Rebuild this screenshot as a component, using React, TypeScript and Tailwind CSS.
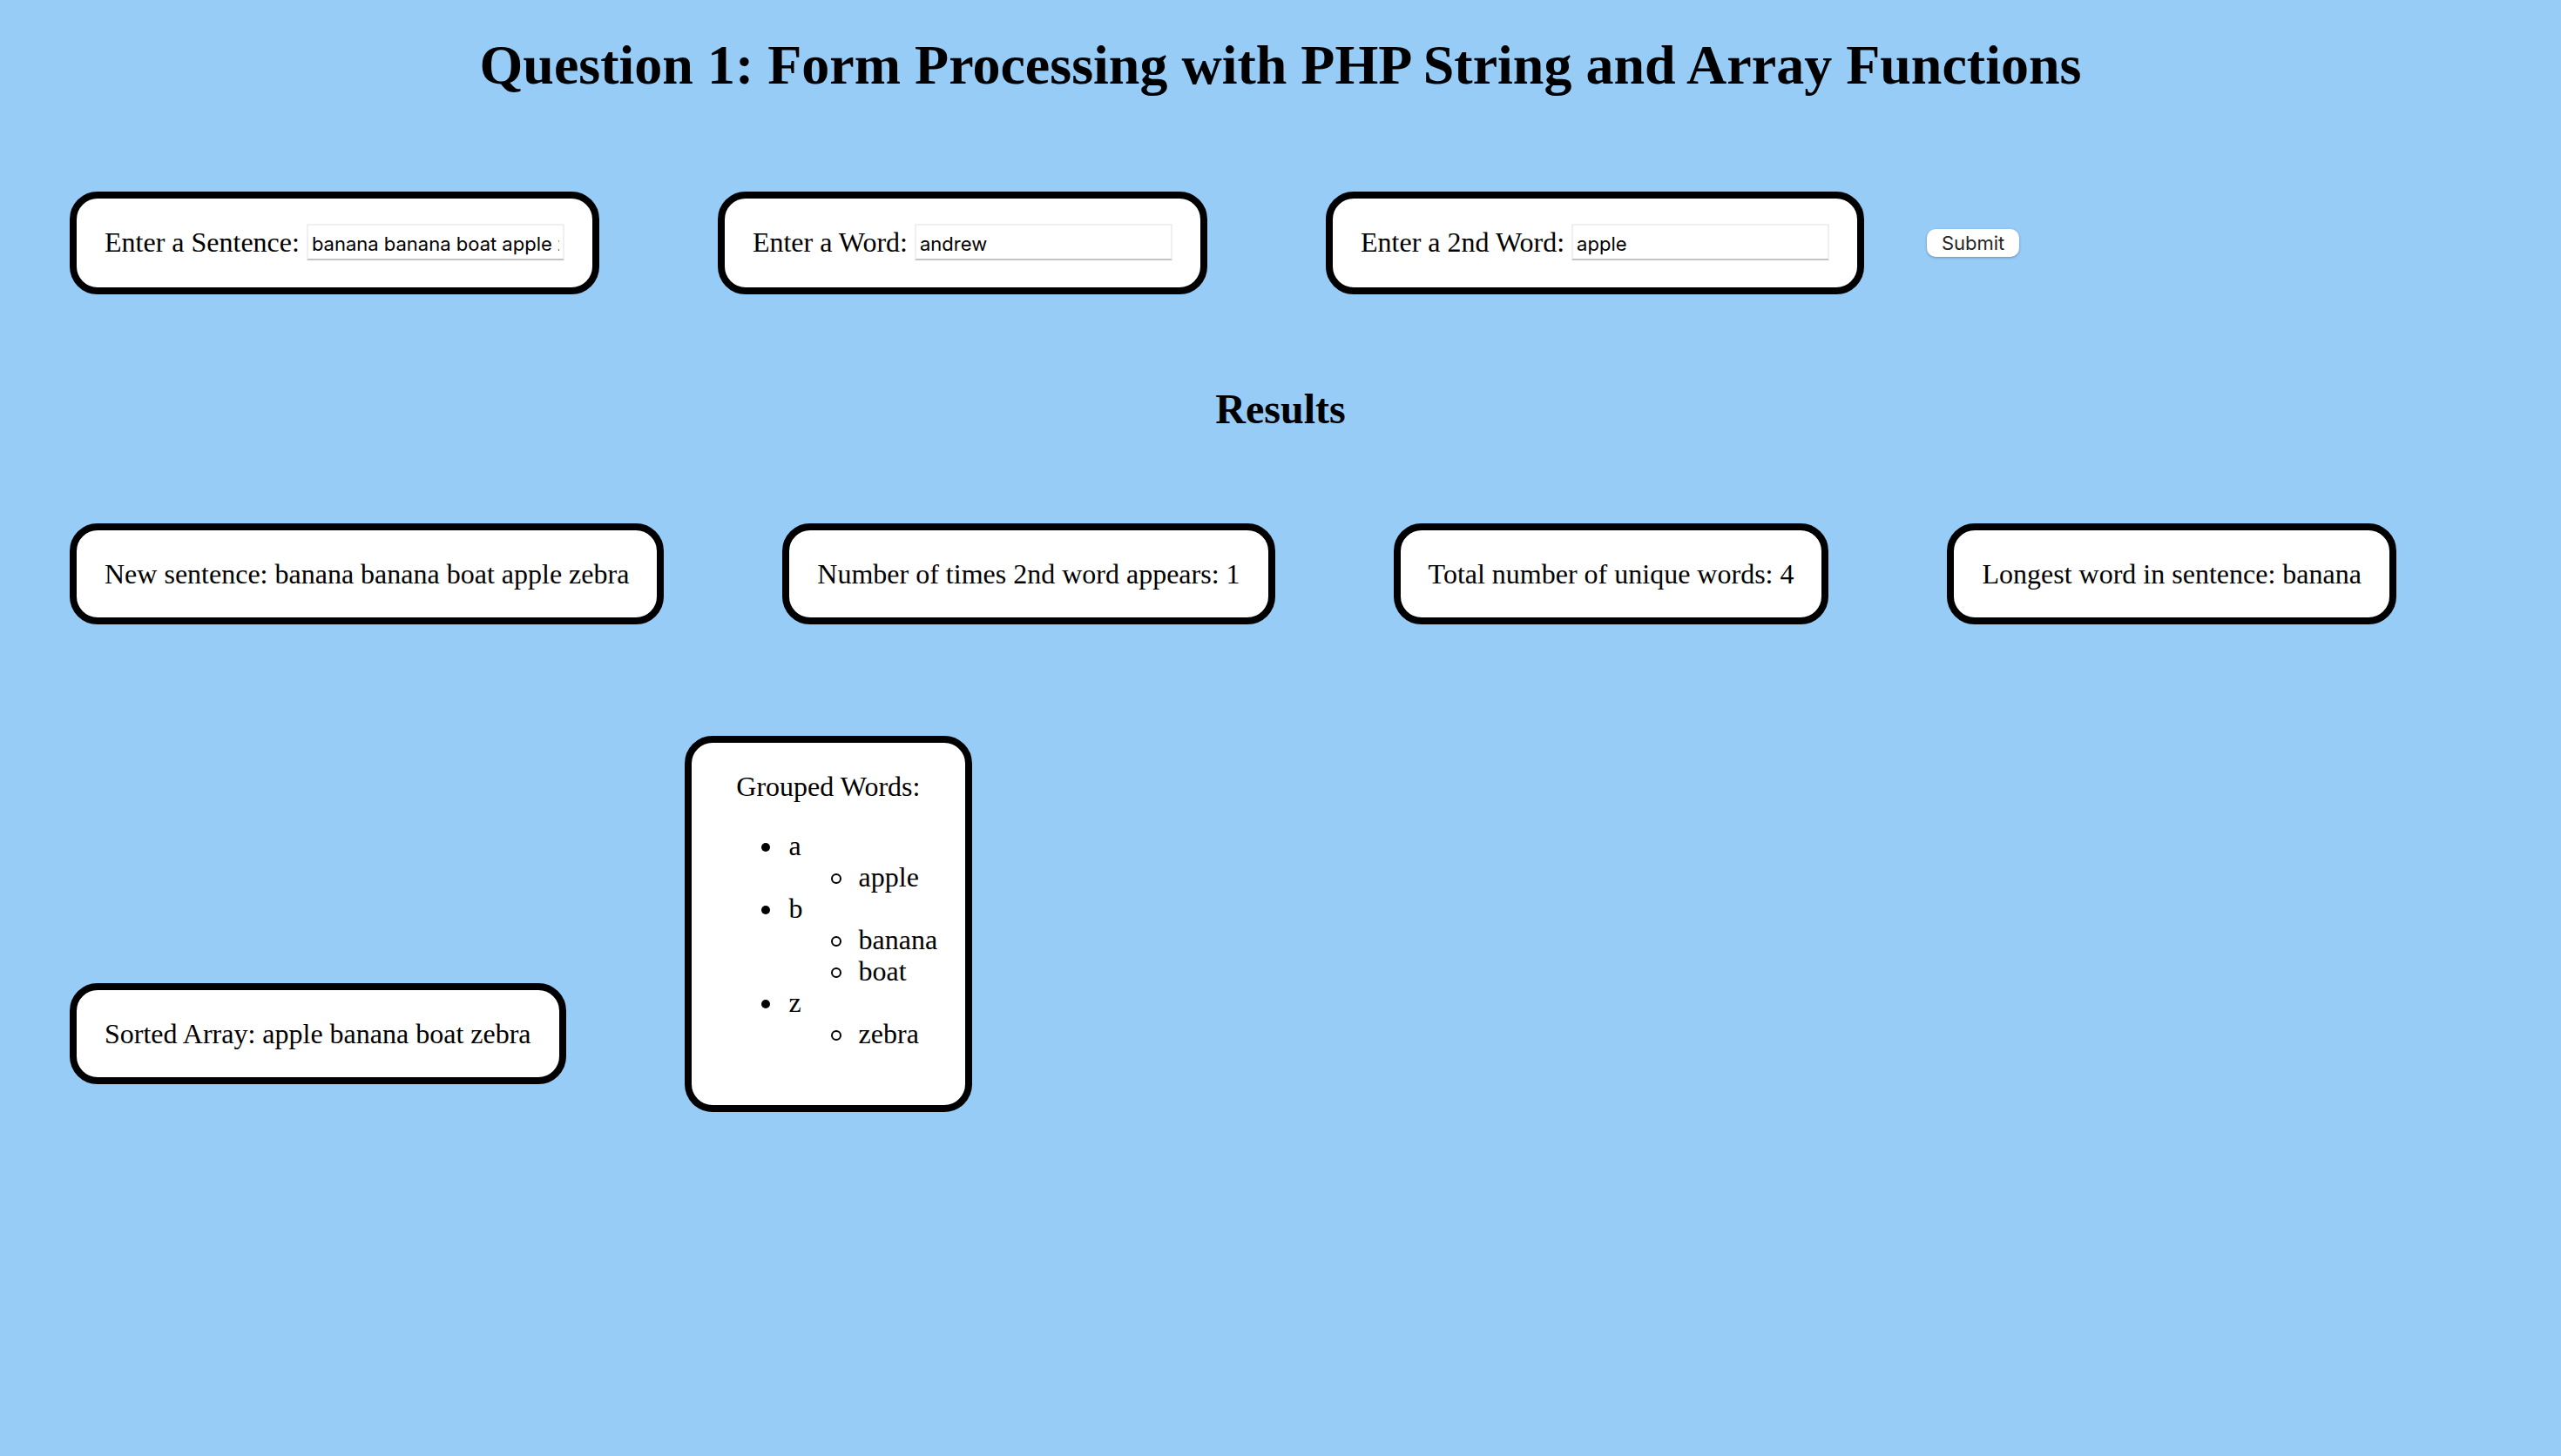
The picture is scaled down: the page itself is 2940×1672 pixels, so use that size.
import { ReactNode } from "react";

function Field({ id, label, value }: { id: string; label: string; value: string }) {
  return (
    <div className="flex items-center gap-2 rounded-[32px] border-8 border-black bg-white px-8 pt-[29px] pb-[31px]">
      <label htmlFor={id}>{label}</label>
      <input
        id={id}
        type="text"
        defaultValue={value}
        className="h-[42px] w-[296px] border-2 border-x-[#efefef] border-t-[#efefef] border-b-[#c4c4c4] bg-white px-1 pt-1 font-[Inter,sans-serif] text-[22px] leading-8 outline-none"
      />
    </div>
  );
}

function Card({ children }: { children: ReactNode }) {
  return <div className="rounded-[32px] border-8 border-black bg-white p-8">{children}</div>;
}

const groups = [
  { letter: "a", words: ["apple"] },
  { letter: "b", words: ["banana", "boat"] },
  { letter: "z", words: ["zebra"] },
];

export default function App() {
  return (
    <main className="min-h-screen bg-[#97ccf6] px-20 pt-[38px] font-['Liberation_Serif',serif] text-[32px] leading-9 text-black">
      <h1 className="text-center text-[64px] leading-[74px] font-bold">
        Question 1: Form Processing with PHP String and Array Functions
      </h1>
      <form className="mt-[108px] flex flex-wrap items-center gap-[136px]" onSubmit={(e) => e.preventDefault()}>
        <Field id="sentence" label="Enter a Sentence:" value="banana banana boat apple zebra" />
        <Field id="word" label="Enter a Word:" value="andrew" />
        <div className="flex items-center gap-[72px]">
          <Field id="second" label="Enter a 2nd Word:" value="apple" />
          <button
            type="submit"
            className="h-8 w-[106px] rounded-[10px] bg-white font-[Inter,sans-serif] text-[22px] leading-8 text-[#262626] shadow-[0_1px_3px_rgba(0,0,0,0.3)]"
          >
            Submit
          </button>
        </div>
      </form>
      <h2 className="mt-[105px] text-center text-[48px] leading-[54px] font-bold">Results</h2>
      <div className="mt-[104px] flex flex-wrap gap-[136px]">
        <Card>New sentence: banana banana boat apple zebra</Card>
        <Card>Number of times 2nd word appears: 1</Card>
        <Card>Total number of unique words: 4</Card>
        <Card>Longest word in sentence: banana</Card>
      </div>
      <div className="mt-32 flex items-end gap-[136px]">
        <div className="mb-8">
          <Card>Sorted Array: apple banana boat zebra</Card>
        </div>
        <Card>
          <p className="text-center">Grouped Words:</p>
          <ul className="my-8 pl-20">
            {groups.map((g) => (
              <li
                key={g.letter}
                className="before:mr-[22px] before:mb-1 before:-ml-8 before:inline-block before:size-[10px] before:rounded-full before:bg-black before:content-['']"
              >
                {g.letter}
                <ul className="pl-20">
                  {g.words.map((w) => (
                    <li
                      key={w}
                      className="before:mr-5 before:mb-[3px] before:-ml-8 before:inline-block before:size-3 before:rounded-full before:border-2 before:border-black before:content-['']"
                    >
                      {w}
                    </li>
                  ))}
                </ul>
              </li>
            ))}
          </ul>
        </Card>
      </div>
    </main>
  );
}
